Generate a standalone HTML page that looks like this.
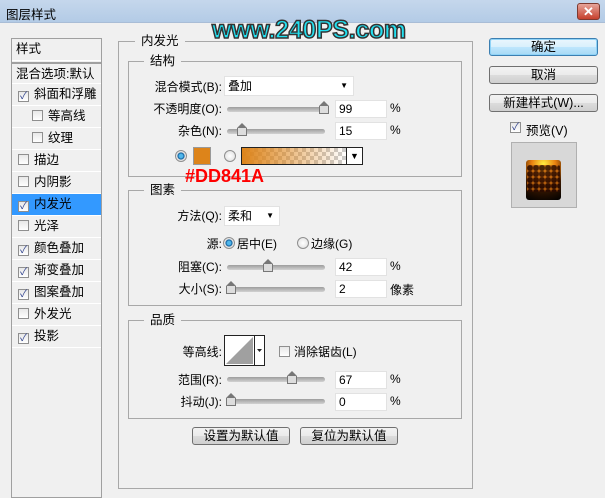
<!DOCTYPE html><html><head><meta charset="utf-8"><style>
*{box-sizing:border-box;margin:0;padding:0}
body{width:605px;height:491px;background:#f0f0f0;font-family:"Liberation Sans","Noto Sans CJK SC",sans-serif;font-size:12px;color:#000;position:relative;overflow:hidden}
.a{position:absolute;white-space:nowrap}
.title{left:0;top:0;width:605px;height:23px;background:linear-gradient(#c5d7ec,#b3cbe6);border-bottom:1px solid #a9bdd6}
.close{left:577px;top:3px;width:23px;height:17px;background:linear-gradient(#e6a49a,#c6402c);border:1px solid #7e3a30;border-radius:3px;color:#fff;font-weight:bold;font-size:13px;text-align:center;line-height:15px}
.lp{left:11px;top:38px;width:91px;height:460px;border:1px solid #a0a0a0;background:#f0f0f0}
.row{position:absolute;left:0;width:89px;height:22px;border-bottom:1px solid #fff;line-height:20px;font-size:12.5px}
.cb{display:inline-block;width:11px;height:11px;border:1px solid #8f8f8f;background:linear-gradient(#e8e8e8,#fff);vertical-align:-1px;margin-right:5px;position:relative;font-size:10px;line-height:9px;text-align:center;color:#2a3d8a}
.fs{position:absolute;border:1px solid #a8a8a8}
.lg{position:absolute;background:#f0f0f0;padding:0 6px;font-size:12.5px;line-height:14px}
.lab{position:absolute;text-align:right;font-size:12px}
.inp{position:absolute;background:#fff;height:18px;border:1px solid #e2e2e2;padding-left:3px;line-height:16px}
.sl{position:absolute;height:5px;background:linear-gradient(#9d9d9d,#d2d2d2);border-radius:3px;width:98px}
.th{position:absolute;width:10px;height:8px;border:1px solid #777;border-top:none;background:#ddd;top:-1px}
.th:before{content:"";position:absolute;left:-1px;top:-5px;border-left:5px solid transparent;border-right:5px solid transparent;border-bottom:5px solid #777}
.btn{position:absolute;height:18px;border:1px solid #707070;border-radius:3px;background:linear-gradient(#f2f2f2,#ebebeb 50%,#dcdcdc 51%,#cfcfcf);text-align:center;line-height:16px;font-size:12.5px}
.rad{position:absolute;width:12px;height:12px;border-radius:50%;border:1px solid #8f8f8f;background:radial-gradient(#fff,#dcdcdc)}
.rad.on{background:radial-gradient(#4fb7ec 25%,#0d5c9a 45%,#e0e0e0 55%,#fff)}
</style></head><body>
<div class="a title"></div>
<div class="a" style="left:6px;top:4px;font-size:12.5px">图层样式</div>
<div class="a close">✕</div>

<div class="a lp">
<div class="row" style="top:0;height:22px;padding-left:4px">样式</div>
<div class="row" style="top:23px;height:22px;padding-left:4px;border-top:2px solid #a0a0a0">混合选项:默认</div>
<div class="row" style="top:45px;padding-left:6px"><span class="cb">✓</span>斜面和浮雕</div>
<div class="row" style="top:67px;padding-left:20px"><span class="cb"></span>等高线</div>
<div class="row" style="top:89px;padding-left:20px"><span class="cb"></span>纹理</div>
<div class="row" style="top:111px;padding-left:6px"><span class="cb"></span>描边</div>
<div class="row" style="top:133px;padding-left:6px"><span class="cb"></span>内阴影</div>
<div class="row" style="top:155px;padding-left:6px;background:#3399ff;color:#000"><span class="cb">✓</span>内发光</div>
<div class="row" style="top:177px;padding-left:6px"><span class="cb"></span>光泽</div>
<div class="row" style="top:199px;padding-left:6px"><span class="cb">✓</span>颜色叠加</div>
<div class="row" style="top:221px;padding-left:6px"><span class="cb">✓</span>渐变叠加</div>
<div class="row" style="top:243px;padding-left:6px"><span class="cb">✓</span>图案叠加</div>
<div class="row" style="top:265px;padding-left:6px"><span class="cb"></span>外发光</div>
<div class="row" style="top:287px;padding-left:6px"><span class="cb">✓</span>投影</div>
</div>

<div class="fs" style="left:118px;top:41px;width:355px;height:448px"></div>
<div class="lg" style="left:135px;top:34px">内发光</div>

<div class="fs" style="left:128px;top:61px;width:334px;height:116px"></div>
<div class="lg" style="left:144px;top:54px">结构</div>
<div class="lab" style="left:140px;top:78px;width:82px">混合模式(B):</div>
<div class="inp" style="left:224px;top:76px;width:130px;height:20px;line-height:18px">叠加<span style="position:absolute;right:5px;top:0;font-size:8px">▼</span></div>
<div class="lab" style="left:140px;top:100px;width:82px">不透明度(O):</div>
<div class="sl" style="left:227px;top:107px"><div class="th" style="left:92px"></div></div>
<div class="inp" style="left:335px;top:100px;width:52px">99</div>
<div class="a" style="left:390px;top:101px">%</div>
<div class="lab" style="left:140px;top:122px;width:82px">杂色(N):</div>
<div class="sl" style="left:227px;top:129px"><div class="th" style="left:10px"></div></div>
<div class="inp" style="left:335px;top:122px;width:52px">15</div>
<div class="a" style="left:390px;top:123px">%</div>
<div class="rad on" style="left:175px;top:150px"></div>
<div class="a" style="left:193px;top:147px;width:18px;height:18px;background:#dd841a;border:1px solid #999"></div>
<div class="rad" style="left:224px;top:150px"></div>
<div class="a" style="left:241px;top:147px;width:122px;height:18px;border:1px solid #222;background:repeating-conic-gradient(#ccc 0 25%,#fff 0 50%) 0 0/8px 8px"></div>
<div class="a" style="left:242px;top:148px;width:104px;height:16px;background:linear-gradient(90deg,#dd841a,rgba(221,132,26,0))"></div>
<div class="a" style="left:346px;top:148px;width:16px;height:16px;background:#fff;border-left:1px solid #222;font-size:9px;text-align:center;line-height:16px">▼</div>
<div class="a" style="left:185px;top:166px;color:#ff0000;font-weight:bold;font-size:18px">#DD841A</div>

<div class="fs" style="left:128px;top:190px;width:334px;height:116px"></div>
<div class="lg" style="left:144px;top:183px">图素</div>
<div class="lab" style="left:140px;top:207px;width:82px">方法(Q):</div>
<div class="inp" style="left:224px;top:206px;width:56px;height:20px;line-height:18px">柔和<span style="position:absolute;right:5px;top:0;font-size:8px">▼</span></div>
<div class="lab" style="left:140px;top:235px;width:82px">源:</div>
<div class="rad on" style="left:223px;top:237px"></div>
<div class="a" style="left:237px;top:235px">居中(E)</div>
<div class="rad" style="left:297px;top:237px"></div>
<div class="a" style="left:311px;top:235px">边缘(G)</div>
<div class="lab" style="left:140px;top:258px;width:82px">阻塞(C):</div>
<div class="sl" style="left:227px;top:265px"><div class="th" style="left:36px"></div></div>
<div class="inp" style="left:335px;top:258px;width:52px">42</div>
<div class="a" style="left:390px;top:259px">%</div>
<div class="lab" style="left:140px;top:280px;width:82px">大小(S):</div>
<div class="sl" style="left:227px;top:287px"><div class="th" style="left:-1px"></div></div>
<div class="inp" style="left:335px;top:280px;width:52px">2</div>
<div class="a" style="left:390px;top:281px">像素</div>

<div class="fs" style="left:128px;top:320px;width:334px;height:99px"></div>
<div class="lg" style="left:144px;top:313px">品质</div>
<div class="lab" style="left:140px;top:343px;width:82px">等高线:</div>
<svg class="a" style="left:224px;top:335px" width="41" height="31"><rect x="0.5" y="0.5" width="40" height="30" fill="#fff" stroke="#222"/><polygon points="2,29 29,2 29,29" fill="#a0a0a0"/><line x1="30.5" y1="1" x2="30.5" y2="30" stroke="#222"/><polygon points="33,14 38,14 35.5,17" fill="#222"/></svg>
<span class="cb" style="position:absolute;left:279px;top:346px"></span>
<div class="a" style="left:294px;top:343px">消除锯齿(L)</div>
<div class="lab" style="left:140px;top:371px;width:82px">范围(R):</div>
<div class="sl" style="left:227px;top:377px"><div class="th" style="left:60px"></div></div>
<div class="inp" style="left:335px;top:371px;width:52px">67</div>
<div class="a" style="left:390px;top:372px">%</div>
<div class="lab" style="left:140px;top:393px;width:82px">抖动(J):</div>
<div class="sl" style="left:227px;top:399px"><div class="th" style="left:-1px"></div></div>
<div class="inp" style="left:335px;top:393px;width:52px">0</div>
<div class="a" style="left:390px;top:394px">%</div>

<div class="btn" style="left:192px;top:427px;width:98px">设置为默认值</div>
<div class="btn" style="left:300px;top:427px;width:98px">复位为默认值</div>

<div class="btn" style="left:489px;top:38px;width:109px;border-color:#3c7fb1;background:linear-gradient(#eaf6fd,#d9f0fc 50%,#bee6fd 51%,#a7d9f5);box-shadow:inset 0 0 0 1px #8fd3f7">确定</div>
<div class="btn" style="left:489px;top:66px;width:109px">取消</div>
<div class="btn" style="left:489px;top:94px;width:109px">新建样式(W)...</div>
<span class="cb" style="position:absolute;left:510px;top:122px">✓</span>
<div class="a" style="left:526px;top:120px;font-size:12.5px">预览(V)</div>
<div class="a" style="left:511px;top:142px;width:66px;height:66px;background:#d8d8d8;border:1px solid #b0b0b0"></div>
<div class="a" style="left:526px;top:160px;width:35px;height:40px;background:radial-gradient(circle at 50% 10%,#ffee40,#e88010 30%,#3a1800 60%,#000);border-radius:3px"></div>
<div class="a" style="left:527px;top:165px;width:33px;height:27px;background:radial-gradient(circle,#2a0a00 2.5px,#c86a10 3.5px) 0 0/6px 6px;opacity:.85;border-radius:2px"></div>

<div class="a" style="left:212px;top:16px;font-weight:bold;font-size:25px;color:#22e0f0;-webkit-text-stroke:1.5px #333;letter-spacing:-0.3px">www.240PS.com</div>
</body></html>
